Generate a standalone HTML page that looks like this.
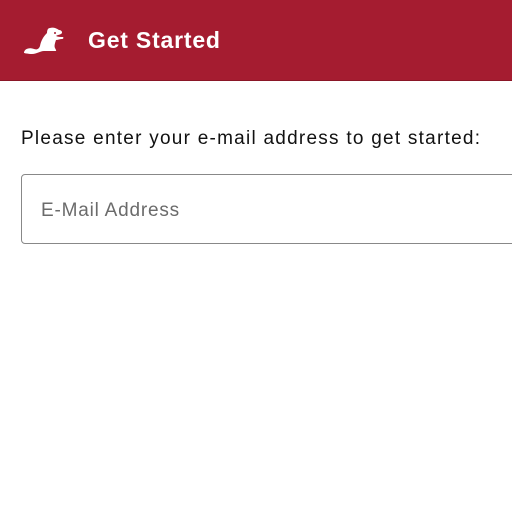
<!DOCTYPE html>
<html><head><style>
body{margin:0;width:512px;height:512px;background:#fff;font-family:"Liberation Sans",sans-serif;overflow:hidden;position:relative}
.h{position:absolute;left:0;top:0;width:512px;height:80px;background:#a51c30;border-bottom:1px solid #8a1627}
.t{position:absolute;left:88px;top:27px;color:#fff;font-size:23px;font-weight:bold;letter-spacing:0.8px}
.p{position:absolute;left:21px;top:128px;font-size:19px;color:#111;letter-spacing:1.25px}
.i{position:absolute;left:21px;top:174px;width:520px;height:70px;border:1px solid #888;border-radius:4px;box-sizing:border-box}
.ph{position:absolute;left:41px;top:200px;font-size:19px;color:#6b6b6b;letter-spacing:0.8px}
</style></head><body>
<div class="h"></div>
<svg style="position:absolute;left:22px;top:22px" width="50" height="38" viewBox="0 0 50 36">
<path fill="#fff" d="M2 30c0-4 5-6 10-4 3 1 5 0 6-3 1-5 3-9 7-13 0-3 1-5 3-5 3-1 6 0 9 2 3 0 4 3 2 4-2 1-4 1-5 2 2 1 5 1 7 1 1 1 0 2-1 2-2 0-4 1-6 1-1 3-2 6-1 8 1 2 2 3 0 3-3 0-8 0-11 0-4 0-7 3-12 3-4 0-8-1-8-1z"/>
<circle cx="33" cy="10" r="1" fill="#a51c30"/>
</svg>
<div class="t">Get Started</div>
<div class="p">Please enter your e-mail address to get started:</div>
<div class="i"></div>
<div class="ph">E-Mail Address</div>
</body></html>
